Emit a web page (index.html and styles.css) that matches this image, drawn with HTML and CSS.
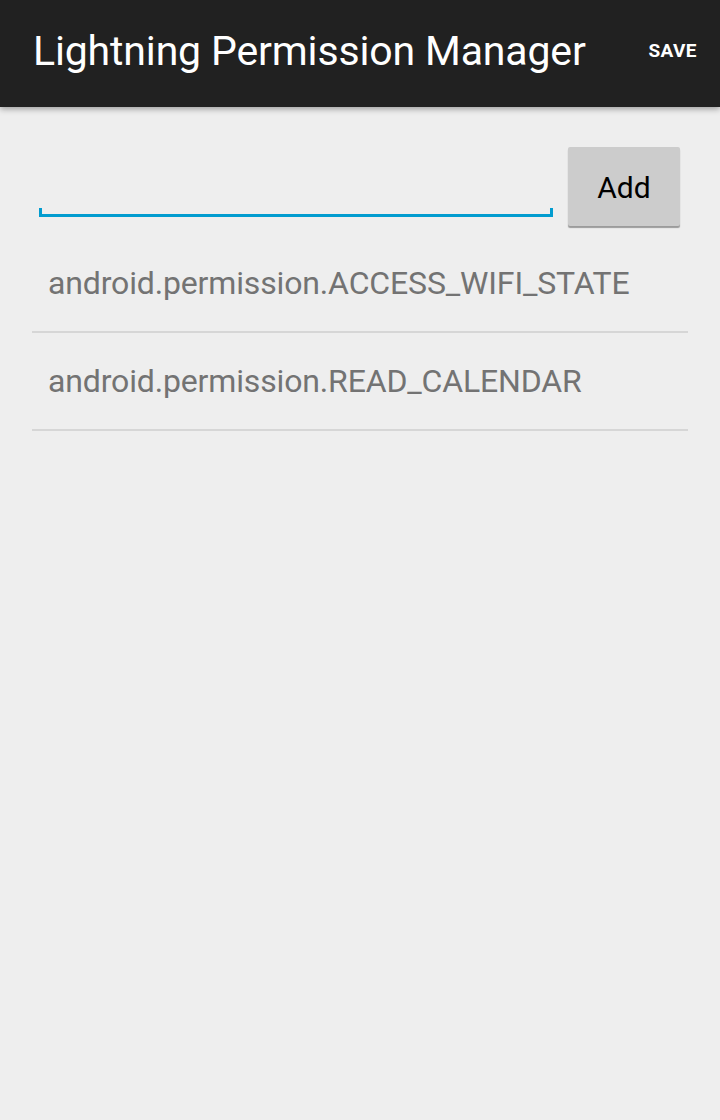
FILE: index.html
```html
<!DOCTYPE html>
<html>
<head>
<meta charset="utf-8">
<link rel="stylesheet" href="styles.css">
</head>
<body>
<header class="appbar">
  <h1 class="title">Lightning Permission Manager</h1>
  <span class="action">SAVE</span>
</header>
<main class="content">
  <div class="add-row">
    <div class="field"><input class="field-input" type="text"></div>
    <button class="btn">Add</button>
  </div>
  <ul class="list">
    <li class="item">android.permission.ACCESS_WIFI_STATE</li>
    <li class="item">android.permission.READ_CALENDAR</li>
  </ul>
</main>
</body>
</html>
```
FILE: styles.css
```css
html, body {
  margin: 0;
  padding: 0;
  background: #eeeeee;
  width: 720px;
  height: 1120px;
  overflow: hidden;
  font-family: Roboto, "Noto Sans", sans-serif;
}
.appbar {
  height: 107px;
  background: #212121;
  display: flex;
  align-items: center;
  justify-content: space-between;
  padding: 0 23px 0 33px;
  box-sizing: border-box;
  box-shadow: 0 2px 6px rgba(0,0,0,0.35);
  position: relative;
  z-index: 1;
}
.title {
  margin: 0;
  color: #ffffff;
  font-size: 41px;
  font-weight: 400;
  letter-spacing: -0.15px;
  line-height: 1;
  padding-bottom: 4px;
}
.action {
  color: #ffffff;
  font-size: 19px;
  font-weight: 700;
  letter-spacing: 0.45px;
  line-height: 1;
  padding-bottom: 6px;
}
.content {
  padding: 0 32px;
}
.add-row {
  display: flex;
  align-items: flex-start;
  padding-top: 40px;
  padding-left: 7px;
  padding-right: 8px;
  gap: 15px;
}
.field {
  flex: 1;
  height: 77px;
  position: relative;
}
.field-input {
  display: block;
  width: 100%;
  box-sizing: border-box;
  height: 70px;
  border: none;
  background: transparent;
  border-bottom: 3px solid #029ccf;
  outline: none;
  font-family: inherit;
  font-size: 28px;
  padding: 0 8px;
}
.field::before, .field::after {
  content: "";
  position: absolute;
  top: 61px;
  width: 3px;
  height: 9px;
  background: #029ccf;
}
.field::before { left: 0; }
.field::after { right: 0; }
.btn {
  width: 112px;
  height: 79px;
  background: #cccccc;
  border: none;
  border-radius: 2px;
  box-shadow: 0 2px 1px rgba(0,0,0,0.35);
  font-family: inherit;
  font-size: 30px;
  color: #000000;
  padding: 2px 0 0;
}
.list {
  list-style: none;
  margin: 8px 0 0;
  padding: 0;
}
.item {
  height: 96px;
  border-bottom: 2px solid #d6d6d6;
  display: flex;
  align-items: center;
  padding-left: 16px;
  color: #737373;
  font-size: 32px;
  letter-spacing: -0.15px;
  line-height: 1;
}
.item:first-child {
  height: 97px;
}
```
